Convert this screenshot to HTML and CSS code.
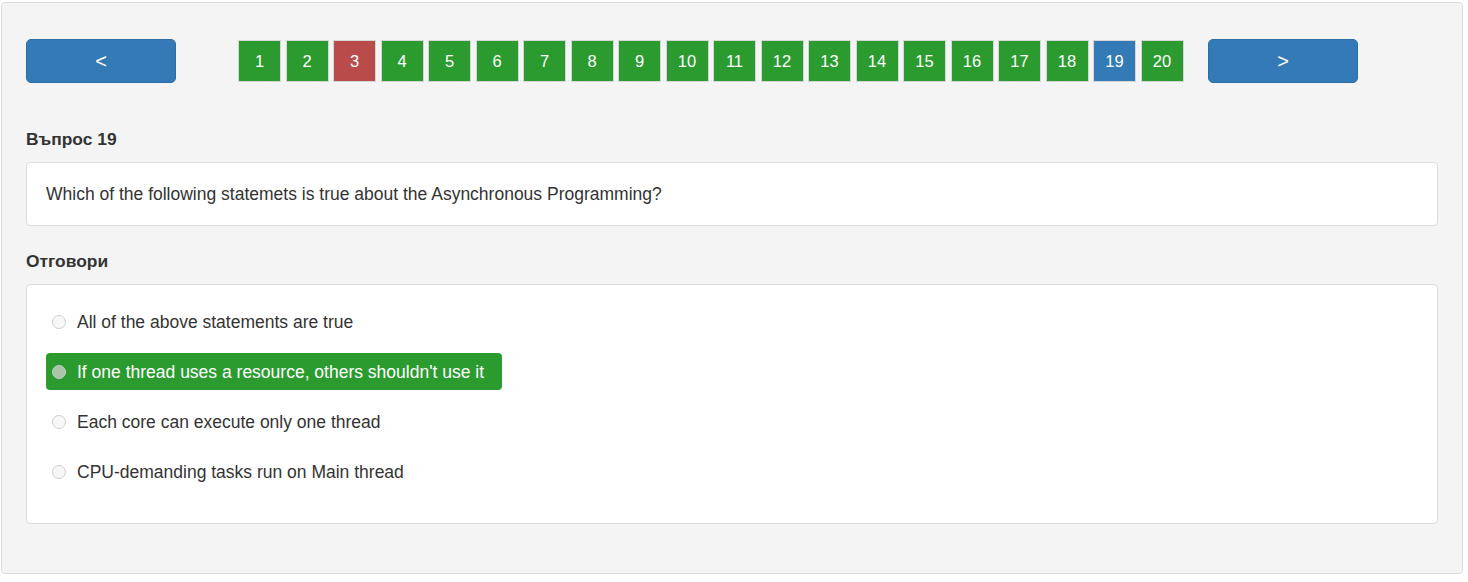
FILE: index.html
```html
<!DOCTYPE html>
<html lang="bg">
<head>
<meta charset="utf-8">
<title>Въпрос 19</title>
<link rel="stylesheet" href="styles.css">
</head>
<body>
<div class="quiz">
  <div class="nav">
    <button class="nav-btn prev">&lt;</button>
    <div class="pages">
      <span class="page ok">1</span>
      <span class="page ok">2</span>
      <span class="page bad">3</span>
      <span class="page ok">4</span>
      <span class="page ok">5</span>
      <span class="page ok">6</span>
      <span class="page ok">7</span>
      <span class="page ok">8</span>
      <span class="page ok">9</span>
      <span class="page ok">10</span>
      <span class="page ok">11</span>
      <span class="page ok">12</span>
      <span class="page ok">13</span>
      <span class="page ok">14</span>
      <span class="page ok">15</span>
      <span class="page ok">16</span>
      <span class="page ok">17</span>
      <span class="page ok">18</span>
      <span class="page current">19</span>
      <span class="page ok">20</span>
    </div>
    <button class="nav-btn next">&gt;</button>
  </div>

  <h4 class="heading">Въпрос 19</h4>
  <div class="card question">Which of the following statemets is true about the Asynchronous Programming?</div>

  <h4 class="heading">Отговори</h4>
  <div class="card answers">
    <div class="answer"><span class="radio"></span><span>All of the above statements are true</span></div>
    <div class="answer selected"><span class="radio checked"></span><span>If one thread uses a resource, others shouldn't use it</span></div>
    <div class="answer"><span class="radio"></span><span>Each core can execute only one thread</span></div>
    <div class="answer"><span class="radio"></span><span>CPU-demanding tasks run on Main thread</span></div>
  </div>
</div>
</body>
</html>
```

FILE: styles.css
```css
* { box-sizing: border-box; }

body {
  margin: 2px 0 0 1px;
  font-family: "Liberation Sans", Arial, sans-serif;
  font-size: 17.5px;
  color: #333;
  background: #fff;
}

.quiz {
  width: 1462px;
  height: 572px;
  background: #f4f4f4;
  border: 1px solid #dcdcdc;
  border-radius: 4px;
  padding: 36px 24px 49px 24px;
}

.nav {
  display: flex;
  align-items: center;
  height: 44px;
}

.nav-btn {
  width: 150px;
  height: 44px;
  background: #337ab7;
  border: 1px solid #2e6da4;
  border-radius: 5px;
  color: #fff;
  font-family: "Liberation Sans", Arial, sans-serif;
  font-size: 20px;
  padding: 0;
}

.prev { margin-right: 62px; }
.next { margin-left: 24.5px; }

.pages {
  display: flex;
  gap: 4.5px;
}

.page {
  width: 43px;
  height: 42px;
  border: 1px solid #d6d6d6;
  color: #fff;
  font-size: 16.5px;
  display: flex;
  align-items: center;
  justify-content: center;
}

.page.ok { background: #2b9b30; }
.page.bad { background: #b94c4a; }
.page.current { background: #337ab7; }

.heading {
  margin: 45px 0 12px 0;
  font-size: 17.4px;
  line-height: 22px;
  font-weight: bold;
  color: #333;
}

.card + .heading { margin-top: 24px; }

.card {
  background: #fff;
  border: 1px solid #dcdcdc;
  border-radius: 4px;
}

.question {
  padding: 20px 19px;
  line-height: 22px;
}

.answers {
  height: 240px;
  padding: 18px 19px 31px 19px;
  display: flex;
  flex-direction: column;
  align-items: flex-start;
  gap: 13px;
}

.answer {
  display: flex;
  align-items: center;
  height: 37px;
  padding: 0 18px 0 6px;
  gap: 11px;
  border-radius: 4px;
  line-height: 20px;
}

.answer.selected {
  background: #2b9b30;
  color: #fff;
}

.radio {
  width: 14px;
  height: 14px;
  border-radius: 50%;
  border: 1px solid #cfcfcf;
  background: #f7f7f7;
  flex: none;
}

.radio.checked {
  background: #a9c4a7;
  border-color: #bcd2ba;
}
```
